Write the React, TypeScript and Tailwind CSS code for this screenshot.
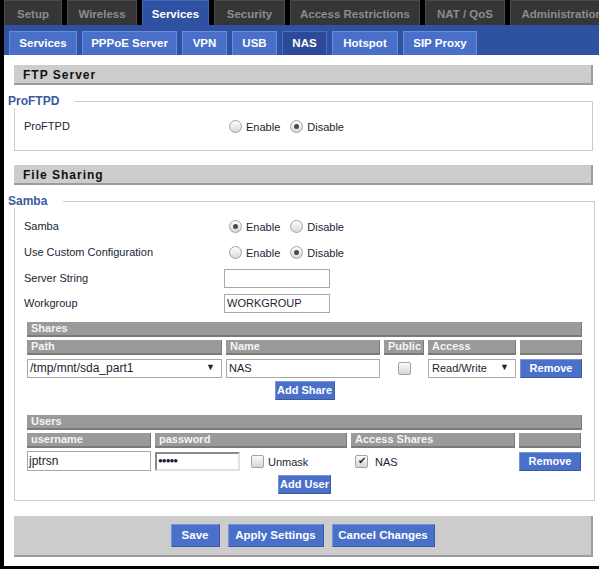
import React from 'react';

// DD-WRT style NAS settings page

const topTabs = [
  { label: 'Setup', w: 'w-[58px]' },
  { label: 'Wireless', w: 'w-[70px]' },
  { label: 'Services', w: 'w-[67px]', active: true },
  { label: 'Security', w: 'w-[71px]' },
  { label: 'Access Restrictions', w: 'w-[130px]' },
  { label: 'NAT / QoS', w: 'w-[80px]' },
  { label: 'Administration', w: 'w-[104px]' },
];

const subTabs = [
  { label: 'Services', w: 'w-[68px]' },
  { label: 'PPPoE Server', w: 'w-[95px]' },
  { label: 'VPN', w: 'w-[45px]' },
  { label: 'USB', w: 'w-[45px]' },
  { label: 'NAS', w: 'w-[45px]', active: true },
  { label: 'Hotspot', w: 'w-[66px]' },
  { label: 'SIP Proxy', w: 'w-[74px]' },
];

const Radio = ({ checked }: { checked?: boolean }) => (
  <span className="flex h-[13px] w-[13px] shrink-0 items-center justify-center rounded-full border border-[#a3a3a3] bg-[linear-gradient(#fdfdfd,#d9d9d9)]">
    {checked && <span className="h-[5px] w-[5px] rounded-full bg-[#4a4a4a]" />}
  </span>
);

const Check = ({ checked }: { checked?: boolean }) => (
  <span className="flex h-[13px] w-[13px] shrink-0 items-center justify-center rounded-[2px] border border-[#a3a3a3] bg-[linear-gradient(#fbfbfb,#d6d6d6)] text-[10px] leading-none text-[#222]">
    {checked ? '✔' : ''}
  </span>
);

const RadioPair = ({ enabled }: { enabled: boolean }) => (
  <div className="flex items-center pl-[5px]">
    <Radio checked={enabled} />
    <span className="ml-[4px] mt-[2px]">Enable</span>
    <span className="ml-[10px]"><Radio checked={!enabled} /></span>
    <span className="ml-[4px] mt-[2px]">Disable</span>
  </div>
);

const Button = ({ children, className = '' }: { children: React.ReactNode; className?: string }) => (
  <button
    className={`flex items-center justify-center border border-[#7393dc] border-b-[#3d5a9c] border-r-[#3d5a9c] bg-[#4a70c9] font-bold text-white ${className}`}
  >
    {children}
  </button>
);

const SectionHeader = ({ title }: { title: string }) => (
  <div className="flex h-[20px] items-center border-b-2 border-r-2 border-[#9c9c9c] bg-[#cdcdcd] pl-[9px] pt-[1px] text-[12px] font-bold tracking-[1px] text-[#111]">
    {title}
  </div>
);

const GrayBar = ({ children, className = '' }: { children?: React.ReactNode; className?: string }) => (
  <div className={`flex items-center border-b-2 border-r border-[#7a7a7a] bg-[#9a9a9a] pl-[4px] font-bold text-[#f4f4f4] ${className}`}>
    {children}
  </div>
);

const Row = ({ label, h = 'h-[26px]', children }: { label: string; h?: string; children: React.ReactNode }) => (
  <div className={`flex items-center ${h}`}>
    <div className="w-[209px] pl-[9px]">{label}</div>
    {children}
  </div>
);

export default function App() {
  return (
    <div className="min-h-[569px] w-[599px] overflow-hidden bg-black pl-[4px] font-['Liberation_Sans',Arial,sans-serif] text-[11px] text-[#1d1d35]">
      {/* top tabs */}
      <div className="flex h-[25px] gap-[5px]">
        {topTabs.map((t) => (
          <div
            key={t.label}
            className={`${t.w} flex shrink-0 items-center justify-center pt-[3px] text-[11.5px] font-bold ${
              t.active
                ? 'border-x border-t border-[#4166b8] bg-[#2e52a1] text-white'
                : 'border-x border-t border-[#4a4a4a] bg-[#363636] text-[#8c8c8c]'
            }`}
          >
            <span className="whitespace-nowrap">{t.label}</span>
          </div>
        ))}
      </div>

      {/* sub tabs */}
      <div className="flex h-[30px] items-end gap-[5px] bg-[#2e52a1] pl-[5px]">
        {subTabs.map((t) => (
          <div
            key={t.label}
            className={`${t.w} flex h-[24px] shrink-0 items-center justify-center border-x border-t pt-[1px] text-[11.5px] font-bold text-white ${
              t.active ? 'border-[#4b6ec4] bg-[#2b4b98]' : 'border-[#6b8bd8] bg-[#4a6fc8]'
            }`}
          >
            {t.label}
          </div>
        ))}
      </div>

      {/* content */}
      <div className="bg-white pb-[9px] pl-[10px] pr-[6px] pt-[10px]">
        <SectionHeader title="FTP Server" />

        <fieldset className="mt-[9px] border border-[#cccccc] pb-[12px] pt-[6px]">
          <legend className="-ml-[7px] pr-[16px] text-[12px] font-bold leading-[14px] text-[#3a5a9e]">ProFTPD</legend>
          <Row label="ProFTPD" h="h-[24px]">
            <RadioPair enabled={false} />
          </Row>
        </fieldset>

        <div className="mt-[14px]">
          <SectionHeader title="File Sharing" />
        </div>

        <fieldset className="mt-[9px] border border-[#cccccc] pb-[6px] pt-[5px]">
          <legend className="-ml-[7px] pr-[16px] text-[12px] font-bold leading-[14px] text-[#3a5a9e]">Samba</legend>
          <Row label="Samba">
            <RadioPair enabled={true} />
          </Row>
          <Row label="Use Custom Configuration">
            <RadioPair enabled={false} />
          </Row>
          <Row label="Server String">
            <div className="h-[19px] w-[106px] border border-[#a9a9a9] bg-white" />
          </Row>
          <Row label="Workgroup" h="h-[24px]">
            <div className="flex h-[19px] w-[106px] items-center border border-[#a9a9a9] bg-white pl-[2px]">WORKGROUP</div>
          </Row>

          {/* shares */}
          <div className="mx-[12px] mt-[7px]">
            <GrayBar className="h-[15px]">Shares</GrayBar>
            <div className="mt-[3px] grid grid-cols-[195px_154px_40px_88px_62px] gap-x-[4px]">
              <GrayBar className="h-[15px]">Path</GrayBar>
              <GrayBar className="h-[15px]">Name</GrayBar>
              <GrayBar className="h-[15px]">Public</GrayBar>
              <GrayBar className="h-[15px]">Access</GrayBar>
              <GrayBar className="h-[15px]" />
            </div>
            <div className="mt-[3px] grid h-[20px] grid-cols-[195px_154px_40px_88px_62px] items-center gap-x-[4px]">
              <div className="flex h-[19px] items-center justify-between border border-[#a9a9a9] bg-white pl-[2px] pr-[6px] text-[12px]">
                <span>/tmp/mnt/sda_part1</span>
                <span className="text-[9px]">▼</span>
              </div>
              <div className="flex h-[19px] items-center border border-[#a9a9a9] bg-white pl-[2px]">NAS</div>
              <div className="flex justify-center">
                <Check />
              </div>
              <div className="flex h-[19px] items-center justify-between border border-[#a9a9a9] bg-white pl-[3px] pr-[6px]">
                <span>Read/Write</span>
                <span className="text-[9px]">▼</span>
              </div>
              <Button className="h-[19px] text-[11px]">Remove</Button>
            </div>
            <div className="mt-[3px] flex justify-center">
              <Button className="h-[19px] w-[60px] text-[11px]">Add Share</Button>
            </div>
          </div>

          {/* users */}
          <div className="mx-[12px] mt-[15px]">
            <GrayBar className="h-[15px]">Users</GrayBar>
            <div className="mt-[3px] grid grid-cols-[124px_192px_164px_62px] gap-x-[4px]">
              <GrayBar className="h-[15px]">username</GrayBar>
              <GrayBar className="h-[15px]">password</GrayBar>
              <GrayBar className="h-[15px]">Access Shares</GrayBar>
              <GrayBar className="h-[15px]" />
            </div>
            <div className="mt-[3px] grid h-[20px] grid-cols-[124px_192px_164px_62px] items-center gap-x-[4px]">
              <div className="flex h-[20px] items-center border border-[#a9a9a9] bg-white pl-[1px] text-[12px]">jptrsn</div>
              <div className="flex items-center">
                <div className="flex h-[19px] w-[85px] items-center border-2 border-[#8a8a8a] border-b-[#e3e3e3] border-r-[#e3e3e3] bg-white pl-[1px] text-[8px] tracking-[-1px]">
                  ●●●●●
                </div>
                <span className="ml-[11px]"><Check /></span>
                <span className="ml-[4px] mt-[2px]">Unmask</span>
              </div>
              <div className="flex items-center pl-[4px]">
                <Check checked />
                <span className="ml-[7px] mt-[2px]">NAS</span>
              </div>
              <Button className="h-[19px] text-[11px]">Remove</Button>
            </div>
            <div className="mt-[4px] flex justify-center">
              <Button className="h-[19px] w-[53px] text-[11px]">Add User</Button>
            </div>
          </div>
        </fieldset>

        {/* footer */}
        <div className="mt-[15px] flex h-[41px] items-center justify-center gap-[8px] border-b-2 border-r-2 border-[#9c9c9c] bg-[#cccccc]">
          <Button className="h-[23px] w-[49px] text-[11.5px]">Save</Button>
          <Button className="h-[23px] w-[96px] text-[11.5px]">Apply Settings</Button>
          <Button className="h-[23px] w-[103px] text-[11.5px]">Cancel Changes</Button>
        </div>
      </div>
    </div>
  );
}
